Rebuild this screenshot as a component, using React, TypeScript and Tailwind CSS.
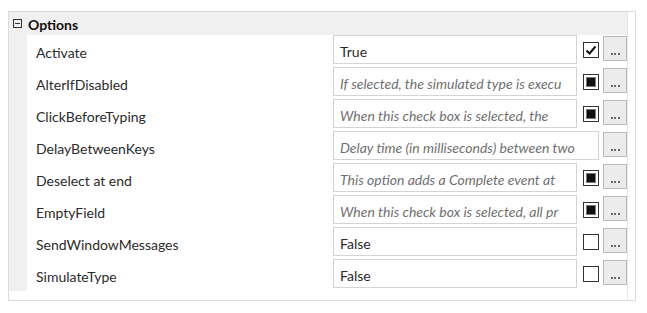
import { Fragment } from "react";

type Row = {
  label: string;
  value: string;
  italic?: boolean;
  check?: "checked" | "mixed" | "empty" | "none";
};

const rows: Row[] = [
  { label: "Activate", value: "True", check: "checked" },
  { label: "AlterIfDisabled", value: "If selected, the simulated type is execu", italic: true, check: "mixed" },
  { label: "ClickBeforeTyping", value: "When this check box is selected, the", italic: true, check: "mixed" },
  { label: "DelayBetweenKeys", value: "Delay time (in milliseconds) between two", italic: true, check: "none" },
  { label: "Deselect at end", value: "This option adds a Complete event at", italic: true, check: "mixed" },
  { label: "EmptyField", value: "When this check box is selected, all pr", italic: true, check: "mixed" },
  { label: "SendWindowMessages", value: "False", check: "empty" },
  { label: "SimulateType", value: "False", check: "empty" },
];

function CheckBox({ state }: { state: Row["check"] }) {
  return (
    <div className="w-[16px] h-[16px] mt-[7px] border border-[#333] bg-white flex items-center justify-center">
      {state === "checked" && (
        <svg width="12" height="12" viewBox="0 0 12 12">
          <path d="M1.5 6.5 L4.5 9.5 L10.5 2.5" fill="none" stroke="#111" strokeWidth="2" />
        </svg>
      )}
      {state === "mixed" && (
        <div className="w-[10px] h-[10px] border border-[#777] flex items-center justify-center">
          <div className="w-[8px] h-[8px] bg-[#111]" />
        </div>
      )}
    </div>
  );
}

export default function App() {
  return (
    <div className="w-[647px] h-[313px] bg-white pt-[11px] pl-[8px] font-['Lato',sans-serif] text-[14px] text-[#2b2b2b]">
      <div className="w-[628px] border border-[#dcdcdc] flex">
        <div className="flex-1 flex flex-col">
          {/* header */}
          <div className="h-[23px] bg-[#f0f0f0] flex items-center">
            <div className="w-[9px] h-[9px] ml-[4px] border border-[#333] flex items-center justify-center">
              <div className="w-[5px] h-[1px] bg-[#333]" />
            </div>
            <span className="ml-[6px] pt-[2px] font-bold text-[#111] leading-none">Options</span>
          </div>

          <div className="flex">
            <div className="w-[18px] bg-[#f0f0f0]" />
            <div className="flex-1 grid grid-cols-[306px_1fr]">
              {rows.map((r) => (
                <Fragment key={r.label}>
                  <div className="h-[32px] pl-[9px] flex items-center pt-[3px]">{r.label}</div>
                  <div className="h-[32px] flex items-start">
                    <div
                      className={
                        "h-[29px] border border-[#d4d4d4] bg-white flex items-center pl-[6px] pt-[4px] overflow-hidden whitespace-nowrap " +
                        (r.check === "none" ? "w-[266px]" : "w-[244px]")
                      }
                    >
                      <span className={r.italic ? "italic text-[#707070]" : "text-[#2b2b2b]"}>{r.value}</span>
                    </div>
                    {r.check !== "none" && (
                      <div className="ml-[6px]">
                        <CheckBox state={r.check} />
                      </div>
                    )}
                    <div className="h-[25px] w-[24px] ml-[4px] mt-[1px] border border-[#b9b9b9] bg-[#ececec] flex items-end justify-center pb-[5px]">
                      <span className="block w-[9px] h-[2px] border-t-2 border-dotted border-[#666]" />
                    </div>
                  </div>
                </Fragment>
              ))}
            </div>
          </div>
          <div className="h-[9px]" />
        </div>
        <div className="w-[8px] border-l border-[#e6e6e6]" />
      </div>
    </div>
  );
}
